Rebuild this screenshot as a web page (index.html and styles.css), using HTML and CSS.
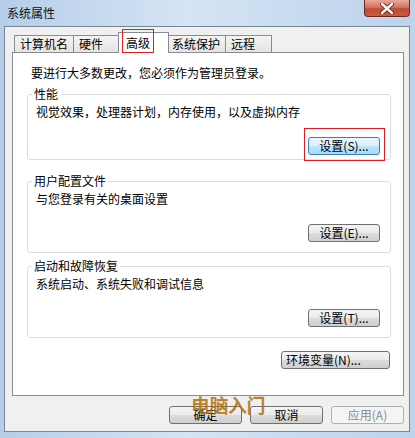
FILE: index.html
```html
<!DOCTYPE html>
<html lang="zh-CN">
<head>
  <meta charset="UTF-8">
  <meta name="viewport" content="width=device-width, initial-scale=1.0">
  <title>系统属性</title>
  <link rel="stylesheet" href="styles.css">
</head>
<body>
  <div class="window">
    <div class="titlebar">
      <span class="title">系统属性</span>
      <button class="close" type="button" aria-label="关闭">
        <svg width="14" height="11" viewBox="0 0 14 11">
          <path d="M2 1 L12 10 M12 1 L2 10" stroke="#5a1e18" stroke-width="4.2" stroke-linecap="round"/>
          <path d="M2 1 L12 10 M12 1 L2 10" stroke="#ffffff" stroke-width="2.4" stroke-linecap="round"/>
        </svg>
      </button>
    </div>

    <div class="client">
      <div class="tabs">
        <div class="tab">计算机名</div>
        <div class="tab">硬件</div>
        <div class="tab tab-active"><span class="tab-label marked">高级</span></div>
        <div class="tab">系统保护</div>
        <div class="tab">远程</div>
      </div>

      <div class="panel">
        <p class="intro">要进行大多数更改，您必须作为管理员登录。</p>

        <fieldset class="group group-perf">
          <legend>性能</legend>
          <p class="desc">视觉效果，处理器计划，内存使用，以及虚拟内存</p>
          <div class="row">
            <span class="marked-wrap">
              <button class="btn btn-hot" type="button">设置(S)...</button>
            </span>
          </div>
        </fieldset>

        <fieldset class="group group-user">
          <legend>用户配置文件</legend>
          <p class="desc">与您登录有关的桌面设置</p>
          <div class="row">
            <button class="btn" type="button">设置(E)...</button>
          </div>
        </fieldset>

        <fieldset class="group group-boot">
          <legend>启动和故障恢复</legend>
          <p class="desc">系统启动、系统失败和调试信息</p>
          <div class="row">
            <button class="btn" type="button">设置(T)...</button>
          </div>
        </fieldset>

        <div class="row env-row">
          <button class="btn btn-env" type="button">环境变量(N)...</button>
        </div>
      </div>

      <div class="actions">
        <button class="btn btn-wide" type="button">确定</button>
        <button class="btn btn-wide" type="button">取消</button>
        <button class="btn btn-wide" type="button" disabled>应用(A)</button>
      </div>
    </div>

    <div class="watermark">电脑入门</div>
  </div>
</body>
</html>
```

FILE: styles.css
```css
/* window frame */
body {
  margin: 0;
  font-family: "Noto Sans CJK SC", "Noto Sans", sans-serif;
  font-size: 12px;
  color: #000;
}

.window {
  position: relative;
  width: 415px;
  height: 438px;
  box-sizing: border-box;
  display: flex;
  flex-direction: column;
  background: linear-gradient(to right, #b6cee8 0%, #d4e4f4 45%, #c9dcf0 70%, #bcd3ec 100%);
  overflow: hidden;
}

.titlebar {
  height: 26px;
  display: flex;
  align-items: flex-start;
  justify-content: space-between;
  padding: 0 5px 0 7px;
}

.title {
  line-height: 26px;
  color: #111;
}

.close {
  width: 46px;
  height: 17px;
  padding: 0;
  border: 1px solid #6e2a22;
  border-top: none;
  border-radius: 0 0 4px 4px;
  background: linear-gradient(#e7a898 0%, #d27662 45%, #c24a36 55%, #c85c40 100%);
  display: flex;
  align-items: center;
  justify-content: center;
}

.client {
  margin: 0 5px 6px 4px;
  border: 1px solid #7b8693;
  background: #f0f0f0;
  padding-bottom: 7px;
}

/* tabs */
.tabs {
  height: 26px;
  display: flex;
  align-items: flex-end;
  margin-left: 9px;
}

.tab {
  position: relative;
  box-sizing: border-box;
  min-width: 47px;
  height: 17px;
  margin-bottom: 1px;
  margin-left: -1px;
  padding: 0 5px;
  line-height: 16px;
  border: 1px solid #898c95;
  border-bottom: none;
  background: linear-gradient(#f4f4f4, #e4e4e4);
}

.tab:first-child {
  margin-left: 0;
}

.tab-active {
  z-index: 2;
  height: 21px;
  margin: 0 -2px 0 -2px;
  min-width: 51px;
  padding: 0 7px;
  line-height: 20px;
  background: #fff;
}

.tab-label {
  display: inline-block;
  line-height: 20px;
}

/* red annotation boxes */
.marked {
  position: relative;
}

.marked::after {
  content: "";
  position: absolute;
  left: -4px;
  right: -4px;
  top: -4px;
  bottom: 0;
  border: 1px solid #e31b23;
}

.marked-wrap {
  position: relative;
  display: flex;
}

.marked-wrap::after {
  content: "";
  position: absolute;
  left: -4px;
  right: -5px;
  top: -9px;
  bottom: -6px;
  border: 1px solid #e31b23;
  pointer-events: none;
}

/* main panel */
.panel {
  position: relative;
  z-index: 1;
  width: 392px;
  box-sizing: border-box;
  margin: -1px 0 0 7px;
  padding: 12px 12px 26px 14px;
  border: 1px solid #898c95;
  background: #fff;
}

.intro {
  margin: 0 0 0 4px;
  line-height: 16px;
}

.group {
  margin: 0;
  padding: 2px 10px 10px 8px;
  min-width: 0;
  border: 1px solid #d5dfe5;
  border-radius: 3px;
}

.group legend {
  margin-left: -4px;
  padding: 0 2px;
  line-height: 16px;
}

.group-perf {
  margin-top: 5px;
  padding-bottom: 4px;
}

.group-user {
  margin-top: 13px;
}

.group-boot {
  margin-top: 5px;
}

.desc {
  margin: 0;
  line-height: 16px;
}

.row {
  display: flex;
  justify-content: flex-end;
  margin-top: 17px;
}

.env-row {
  margin-top: 13px;
  margin-right: 1px;
}

/* buttons */
.btn {
  box-sizing: border-box;
  width: 72px;
  height: 18px;
  padding: 0;
  font-family: inherit;
  font-size: 12px;
  line-height: 16px;
  color: #000;
  border: 1px solid #707070;
  border-radius: 3px;
  background: linear-gradient(#f4f4f4 0%, #ebebeb 50%, #dcdcdc 50%, #cfcfcf 100%);
}

.btn-hot {
  border-color: #3c7fb1;
  background: linear-gradient(#eaf6fd 0%, #d9f0fc 50%, #bee6fd 50%, #a7d9f5 100%);
}

.btn-env {
  width: 109px;
  text-align: left;
  padding-left: 4px;
}

.btn-wide {
  width: 73px;
}

.btn:disabled {
  color: #8a8a8a;
  border-color: #adb2b5;
  background: #f4f4f4;
}

.actions {
  display: flex;
  justify-content: flex-end;
  gap: 8px;
  margin-top: 10px;
  padding-right: 5px;
}

/* site watermark over the dialog */
.watermark {
  position: absolute;
  left: 191px;
  top: 395px;
  font-size: 19px;
  font-weight: bold;
  line-height: 19px;
  color: rgba(176, 112, 10, 0.85);
  letter-spacing: -0.5px;
}

.watermark::before {
  content: "";
  position: absolute;
  left: -9px;
  width: 93px;
  top: -4px;
  border-top: 1px solid #e07a28;
}
```
